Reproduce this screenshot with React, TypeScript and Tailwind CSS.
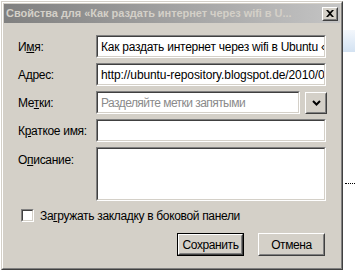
import React from "react";

const sunken =
  "border border-t-[#808080] border-l-[#808080] border-b-white border-r-white";
const sunkenInner =
  "border border-t-[#404040] border-l-[#404040] border-b-[#d4d0c8] border-r-[#d4d0c8]";
const raised =
  "border border-t-white border-l-white border-b-[#404040] border-r-[#404040]";
const raisedInner =
  "border border-t-[#d4d0c8] border-l-[#d4d0c8] border-b-[#808080] border-r-[#808080]";

function Field({ children, width, height }: { children?: React.ReactNode; width: string; height: string }) {
  return (
    <div className={`${sunken} ${width} ${height} shrink-0`}>
      <div className={`${sunkenInner} w-full h-full bg-white overflow-hidden`}>
        <div className="pl-[3px] pt-[3px] whitespace-nowrap leading-[15px]">{children}</div>
      </div>
    </div>
  );
}

function Label({ children }: { children: React.ReactNode }) {
  return <div className="w-[78px] shrink-0 text-black whitespace-nowrap tracking-[-0.3px]">{children}</div>;
}

export default function App() {
  return (
    <div className="w-[355px] h-[272px] bg-white flex overflow-hidden font-['Liberation_Sans',Arial,sans-serif] text-[12px]">
      <div className="mt-[1px] ml-[1px] w-[342px] h-[269px] shrink-0 border border-t-[#d4d0c8] border-l-[#d4d0c8] border-b-[#404040] border-r-[#404040]">
        <div className="w-full h-full border border-t-white border-l-white border-b-[#808080] border-r-[#808080] bg-[#d4d0c8] p-[1px] flex flex-col">
          {/* title bar */}
          <div className="h-[19px] shrink-0 flex items-center bg-gradient-to-r from-[#808080] to-[#c4c4c4] pl-[2px]">
            <span className="text-[#d4d0c8] font-bold text-[11px] whitespace-nowrap tracking-[-0.05px]">
              Свойства для «Как раздать интернет через wifi в U...
            </span>
            <div className={`ml-auto mr-[2px] w-[16px] h-[14px] ${raised}`}>
              <div className={`${raisedInner} w-full h-full bg-[#d4d0c8] flex items-center justify-center`}>
                <svg width="8" height="7" viewBox="0 0 8 7">
                  <path d="M0 0h2l2 2 2-2h2L5 3.5 8 7H6L4 5 2 7H0l3-3.5z" fill="#000" />
                </svg>
              </div>
            </div>
          </div>

          {/* body */}
          <div className="flex flex-col pl-[14px] pt-[12px]">
            <div className="flex items-center h-[23px]">
              <Label>И<u>м</u>я:</Label>
              <Field width="w-[230px]" height="h-[23px]">
                <span className="text-black tracking-[-0.25px]">Как раздать интернет через wifi в Ubuntu « Ubuntu Repository</span>
              </Field>
            </div>
            <div className="flex items-center h-[23px] mt-[5px]">
              <Label>А<u>д</u>рес:</Label>
              <Field width="w-[230px]" height="h-[23px]">
                <span className="text-black tracking-[-0.1px]">http://ubuntu-repository.blogspot.de/2010/09/wifi-ubuntu.html</span>
              </Field>
            </div>
            <div className="flex items-center h-[23px] mt-[5px]">
              <Label>Ме<u>т</u>ки:</Label>
              <Field width="w-[204px]" height="h-[23px]">
                <span className="text-[#8a8a8a] tracking-[-0.55px]">Разделяйте метки запятыми</span>
              </Field>
              <div className={`ml-[5px] w-[22px] h-[22px] ${raised}`}>
                <div className={`${raisedInner} w-full h-full bg-[#d4d0c8] flex items-center justify-center`}>
                  <svg width="9" height="6" viewBox="0 0 9 6">
                    <path d="M1 1l3.5 3.5L8 1" stroke="#000" strokeWidth="2" fill="none" />
                  </svg>
                </div>
              </div>
            </div>
            <div className="flex items-center h-[23px] mt-[5px]">
              <Label>К<u>р</u>аткое имя:</Label>
              <Field width="w-[230px]" height="h-[23px]" />
            </div>
            <div className="flex items-start h-[54px] mt-[5px]">
              <div className="pt-[4px]">
                <Label>О<u>п</u>исание:</Label>
              </div>
              <Field width="w-[230px]" height="h-[54px]" />
            </div>
            <div className="flex items-center h-[13px] mt-[8px] pl-[3px]">
              <div className={`${sunken} w-[13px] h-[13px]`}>
                <div className={`${sunkenInner} w-full h-full bg-white`} />
              </div>
              <span className="ml-[6px] text-black whitespace-nowrap tracking-[-0.33px]">
                За<u>г</u>ружать закладку в боковой панели
              </span>
            </div>
            <div className="flex justify-end mt-[11px] pr-[1px] w-[308px] gap-[14px]">
              <div className="w-[67px] h-[23px] border border-black">
                <div className={`${raised} w-full h-full`}>
                  <div className={`${raisedInner} w-full h-full bg-[#d4d0c8] flex items-center justify-center text-black tracking-[-0.4px]`}>
                    Сохранить
                  </div>
                </div>
              </div>
              <div className={`w-[67px] h-[23px] ${raised}`}>
                <div className={`${raisedInner} w-full h-full bg-[#d4d0c8] flex items-center justify-center text-black tracking-[-0.4px]`}>
                  Отмена
                </div>
              </div>
            </div>
          </div>
        </div>
      </div>
      <div className="flex-1 flex flex-col">
        <div className="h-[30px] shrink-0" />
        <div className="h-[22px] shrink-0 bg-gradient-to-b from-[#f3f7fc] to-[#d3e2f2]" />
        <div className="h-[131px] shrink-0" />
        <div className="ml-[2px] border-t border-dotted border-black" />
      </div>
    </div>
  );
}
